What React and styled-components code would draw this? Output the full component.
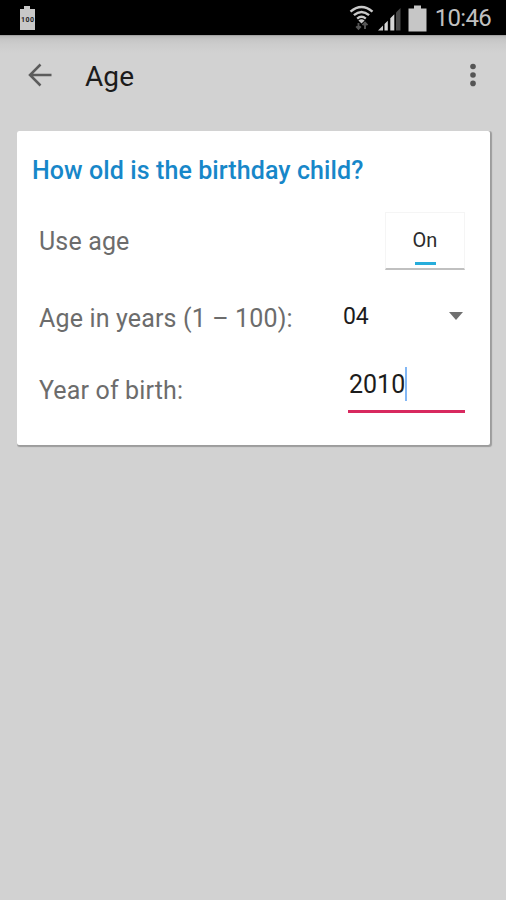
import React from "react";
import styled, { createGlobalStyle } from "styled-components";

const GlobalStyle = createGlobalStyle`
  body {
    margin: 0;
    background-color: #d2d2d2;
    font-family: Roboto, sans-serif;
  }
`;

const Screen = styled.div`
  width: 506px;
  height: 900px;
  overflow: hidden;
  background-color: #d2d2d2;
`;

const StatusBar = styled.div`
  height: 35px;
  box-sizing: border-box;
  padding: 1px 15px 0 19px;
  display: flex;
  align-items: center;
  justify-content: space-between;
  background-color: #000;
`;
const StatusIcons = styled.div`
  display: flex;
  align-items: center;
`;
const Clock = styled.span`
  margin-left: 8px;
  font-size: 24px;
  line-height: 34px;
  letter-spacing: -0.7px;
  color: #c0c0c0;
`;
const BatteryLevel = styled.svg`
  display: block;
  margin-top: 1px;
  font-family: Roboto, sans-serif;
  font-size: 7px;
  font-weight: 700;
`;
const Signal = styled.svg`
  margin: 2px 7px 0 4px;
`;

const Toolbar = styled.header`
  height: 96px;
  box-sizing: border-box;
  padding: 0 29px 16px 28px;
  display: flex;
  align-items: center;
  background: linear-gradient(#8c8c8c 0, #b9b9b9 1px, #c5c5c5 4px, #cccccc 9px, #d2d2d2 18px);
`;
const Title = styled.h1`
  flex: 1;
  margin: 3px 0 0 33px;
  font-size: 28px;
  font-weight: 400;
  letter-spacing: 0.1px;
  line-height: 34px;
  color: #1c1c1c;
`;

const Card = styled.section`
  width: 473px;
  height: 314px;
  margin-left: 17px;
  box-sizing: border-box;
  padding: 0 25px 0 22px;
  border-radius: 2px;
  background-color: #fff;
  box-shadow: 1px 1px 1px 1px #9c9c9c;
  clip-path: inset(0 -4px -4px 0);
`;
const Question = styled.h2`
  height: 78px;
  margin: 0 0 0 -7px;
  font-size: 25px;
  font-weight: 500;
  letter-spacing: 0.09px;
  line-height: 80px;
  white-space: nowrap;
  color: #1787c9;
`;
const Row = styled.div`
  height: ${(props) => props.$height}px;
  display: flex;
  align-items: center;
  justify-content: space-between;
`;
const Label = styled.span`
  padding-top: ${(props) => props.$drop || 0}px;
  font-size: 25px;
  letter-spacing: 0.15px;
  white-space: nowrap;
  color: #6c6c6c;
`;

const Toggle = styled.button`
  width: 80px;
  height: 58px;
  margin: 0;
  padding: 0 0 3px;
  box-sizing: border-box;
  border: 1px solid #f5f5f5;
  border-bottom: 2px solid #c0c0c0;
  background-color: #fff;
  display: flex;
  flex-direction: column;
  align-items: center;
  justify-content: flex-end;
  font-family: inherit;
  font-size: 20px;
  line-height: 24px;
  color: #2c2c2c;
`;
const ToggleMark = styled.span`
  width: 21px;
  height: 3px;
  margin-top: 10px;
  background-color: #27addb;
`;

const Spinner = styled.div`
  width: 122px;
  box-sizing: border-box;
  padding-right: 2px;
  display: flex;
  align-items: center;
  justify-content: space-between;
  font-size: 23px;
  letter-spacing: -0.3px;
  color: #1c1c1c;
`;
const YearField = styled.div`
  width: 117px;
  height: 46px;
  box-sizing: border-box;
  padding-left: 1px;
  border-bottom: 3px solid #d8295f;
  display: flex;
  align-items: flex-start;
  font-size: 25px;
  line-height: 36px;
  color: #1c1c1c;
`;
const Caret = styled.span`
  width: 2px;
  height: 34px;
  background-color: #82b7f5;
`;

function BatteryLevelIcon() {
  return (
    <BatteryLevel width="17" height="25" viewBox="0 0 17 25">
      <path d="M5 0h6v3h5v21H1V3h4z" fill="#c8c8c8" />
      <text x="8.5" y="15.5" textAnchor="middle" textLength="13" fill="#222">
        100
      </text>
    </BatteryLevel>
  );
}

function WifiIcon() {
  return (
    <svg width="25" height="26" viewBox="0 0 25 26">
      <g fill="none" stroke="#c9c9c9" strokeWidth="2.4">
        <path d="M1.5 6.6Q12.5-2.6 23.5 6.6" />
        <path d="M4.9 10.2Q12.5 3.7 20.1 10.2" />
        <path d="M8.2 13.6Q12.5 10 16.8 13.6" />
      </g>
      <path d="M9.4 15.4Q12.5 13.2 15.6 15.4L12.500 18.600z" fill="#c9c9c9" />
      <path
        d="M9.500 18v5.500M7.200 21.300l2.300 2.500 2.300-2.500M16 24v-6M13.500 20.200l2.500-2.600 2.500 2.600"
        fill="none"
        stroke="#555"
        strokeWidth="1.9"
      />
    </svg>
  );
}

function SignalIcon() {
  return (
    <Signal width="23" height="24" viewBox="0 0 23 24">
      <path d="M0 23.5L5 18.500v5z" fill="#c9c9c9" />
      <path d="M6.500 17l3.300-3.300v9.800H6.500zM12.300 11.200l4-4v16.300h-4z" fill="#d5d5d5" />
      <path d="M18 5.500L22.500 1v22.500H18z" fill="#484848" />
    </Signal>
  );
}

function BatteryIcon() {
  return (
    <svg width="19" height="27" viewBox="0 0 19 27">
      <path d="M6 .5h7v3h5.500v23H.5v-23H6z" fill="#c6c6c6" />
    </svg>
  );
}

function App() {
  return (
    <Screen>
      <GlobalStyle />
      <StatusBar>
        <BatteryLevelIcon />
        <StatusIcons>
          <WifiIcon />
          <SignalIcon />
          <BatteryIcon />
          <Clock>10:46</Clock>
        </StatusIcons>
      </StatusBar>
      <Toolbar>
        <svg width="24" height="24" viewBox="0 0 24 24">
          <path
            d="M23.5 12H2M12.500 1.500L2 12l10.500 10.500"
            fill="none"
            stroke="#5c5c5c"
            strokeWidth="2.5"
          />
        </svg>
        <Title>Age</Title>
        <svg width="8" height="24" viewBox="0 0 8 24">
          <g fill="#555">
            <circle cx="4" cy="3.5" r="2.8" />
            <circle cx="4" cy="12" r="2.8" />
            <circle cx="4" cy="20.4" r="2.8" />
          </g>
        </svg>
      </Toolbar>
      <Card>
        <Question>How old is the birthday child?</Question>
        <Row $height={63}>
          <Label $drop={2}>Use age</Label>
          <Toggle>
            On
            <ToggleMark />
          </Toggle>
        </Row>
        <Row $height={88}>
          <Label $drop={4}>Age in years (1 – 100):</Label>
          <Spinner>
            04
            <svg width="14" height="8" viewBox="0 0 14 8">
              <path d="M0 0h14L7 8z" fill="#707070" />
            </svg>
          </Spinner>
        </Row>
        <Row $height={60}>
          <Label>Year of birth:</Label>
          <YearField>
            2010
            <Caret />
          </YearField>
        </Row>
      </Card>
    </Screen>
  );
}
export default App;
